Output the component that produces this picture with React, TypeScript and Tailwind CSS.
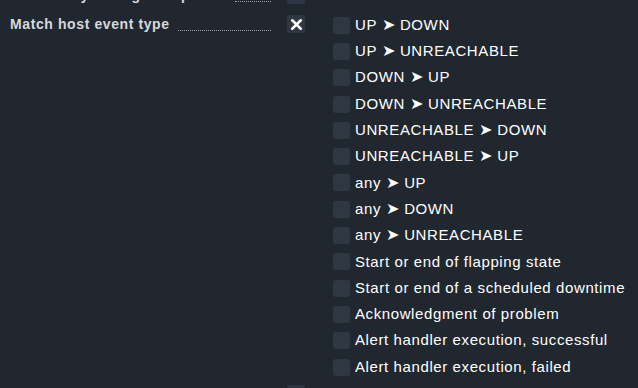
import { X } from "lucide-react";

const EVENTS = [
  "UP ➤ DOWN",
  "UP ➤ UNREACHABLE",
  "DOWN ➤ UP",
  "DOWN ➤ UNREACHABLE",
  "UNREACHABLE ➤ DOWN",
  "UNREACHABLE ➤ UP",
  "any ➤ UP",
  "any ➤ DOWN",
  "any ➤ UNREACHABLE",
  "Start or end of flapping state",
  "Start or end of a scheduled downtime",
  "Acknowledgment of problem",
  "Alert handler execution, successful",
  "Alert handler execution, failed",
];

function Label({ text }: { text: string }) {
  return (
    <div className="flex w-[261px] items-end gap-[8px] text-[14px] font-bold tracking-[0.6px] text-[#d5d9de]">
      <span className="whitespace-nowrap">{text}</span>
      <span className="mb-[4px] flex-1 border-b border-dotted border-[#9aa0a8]" />
    </div>
  );
}

function Box({ checked }: { checked?: boolean }) {
  return (
    <div className="flex h-[18px] w-[18px] items-center justify-center rounded-[3px] bg-[#2f3742]">
      {checked && <X size={17} strokeWidth={3.6} className="text-white" />}
    </div>
  );
}

function EventText({ text }: { text: string }) {
  const parts = text.split("➤");
  if (parts.length < 2) return <>{text}</>;
  return (
    <>
      {parts[0]}
      <span className="text-[16px] leading-none">➤</span>
      {parts[1]}
    </>
  );
}

export default function App() {
  return (
    <div
      className="h-[388px] w-[638px] overflow-hidden bg-[#21272f]"
      style={{ fontFamily: '"Liberation Sans", Arial, sans-serif' }}
    >
      <div className="-mt-[14px] pl-[10px]">
        <div className="flex h-[29px] items-start">
          <div className="flex h-[18px] items-center">
            <Label text="Match only during time period" />
          </div>
          <div className="ml-[16px]">
            <Box />
          </div>
        </div>
        <div className="flex items-start">
          <div className="flex h-[18px] items-center">
            <Label text="Match host event type" />
          </div>
          <div className="ml-[16px]">
            <Box checked />
          </div>
          <div className="ml-[28px] -mt-[3px] flex flex-col">
            {EVENTS.map((e) => (
              <div key={e} className="flex h-[26.3px] items-center gap-[5px]">
                <div className="h-[17px] w-[17px] rounded-[3px] bg-[#2f3742]" />
                <span className="whitespace-nowrap text-[15px] tracking-[0.6px] text-white">
                  <EventText text={e} />
                </span>
              </div>
            ))}
          </div>
        </div>
        <div className="mt-[5px] flex items-start">
          <div className="flex h-[18px] items-center">
            <Label text="Match service event type" />
          </div>
          <div className="ml-[16px]">
            <Box />
          </div>
        </div>
      </div>
    </div>
  );
}
